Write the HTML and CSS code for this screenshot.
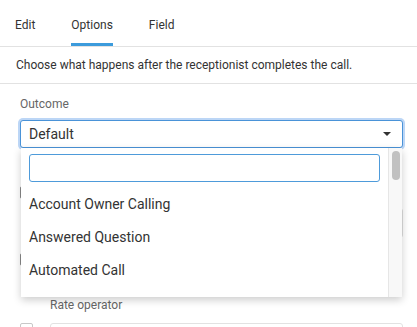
FILE: index.html
```html
<!DOCTYPE html>
<html lang="en">
<head>
    <meta charset="UTF-8">
    <meta name="viewport" content="width=device-width, initial-scale=1.0">
    <title>Call outcome options</title>
    <link rel="stylesheet" href="styles.css">
</head>
<body>
    <!-- Tabs -->
    <div class="tabs">
        <span class="tab">Edit</span>
        <span class="tab active">Options</span>
        <span class="tab">Field</span>
    </div>

    <p class="intro">Choose what happens after the receptionist completes the call.</p>

    <div class="form">
        <!-- Outcome select, opened -->
        <div class="field">
            <div class="field-label">Outcome</div>
            <div class="select-wrap">
                <div class="select">
                    <span>Default</span>
                    <svg class="caret" width="8" height="4" viewBox="0 0 8 4"><path d="M0 0h8L4 4z" fill="#333"/></svg>
                </div>

                <div class="dropdown">
                    <div class="dd-main">
                        <input class="dd-search" type="text">
                        <ul class="dd-list">
                            <li>Account Owner Calling</li>
                            <li>Answered Question</li>
                            <li>Automated Call</li>
                            <li>Billing Question</li>
                        </ul>
                    </div>
                    <div class="dd-scroll"><div class="dd-thumb"></div></div>
                </div>
            </div>
        </div>

        <!-- Options behind the dropdown -->
        <div class="check-row first">
            <span class="box"></span>
            <span class="check-text">Send a follow-up email</span>
        </div>
        <div class="check-input"></div>
        <div class="check-row second">
            <span class="box"></span>
            <span class="check-text">Notify account owner</span>
        </div>
        <div class="check-row third">
            <span class="check-text">Call follow up</span>
        </div>

        <div class="sub-label">Rate operator</div>
        <div class="rate-row">
            <span class="box"></span>
            <div class="rate-input"></div>
        </div>
    </div>
</body>
</html>
```

FILE: styles.css
```css
/* Base */
body {
    margin: 0;
    font-family: Roboto, "Liberation Sans", Arial, sans-serif;
    color: #333;
    background: #fff;
    overflow: hidden;
}

/* Tabs */
.tabs {
    display: flex;
    gap: 36px;
    padding-left: 15px;
    border-bottom: 1px solid #e2e2e2;
}

.tab {
    padding-top: 18px;
    height: 25px;
    line-height: 14px;
    font-size: 12px;
    color: #333;
    border-bottom: 3px solid transparent;
}

.tab.active {
    border-bottom-color: #3c9bdc;
}

.intro {
    margin: 0;
    padding: 10px 16px;
    font-size: 12px;
    line-height: 16px;
    color: #333;
    border-bottom: 1px solid #e2e2e2;
}

/* Form */
.form {
    padding: 0 14px 0 20px;
}

.field-label {
    margin-top: 13px;
    margin-bottom: 9px;
    font-size: 12px;
    line-height: 14px;
    color: #666;
}

.select-wrap {
    position: relative;
}

.select {
    display: flex;
    align-items: center;
    justify-content: space-between;
    height: 28px;
    box-sizing: border-box;
    padding: 0 11px 0 8px;
    font-size: 14px;
    border: 1px solid #4a93d8;
    border-radius: 3px;
    box-shadow: 0 0 0 2px #bcd6f6;
    background: #fff;
}

/* Dropdown list */
.dropdown {
    position: absolute;
    top: 100%;
    left: 1px;
    right: 1px;
    height: 149px;
    display: flex;
    background: #fff;
    box-shadow: 0 3px 8px rgba(0, 0, 0, 0.2);
    z-index: 2;
}

.dd-main {
    flex: 1;
    padding: 6px 8px 0 8px;
    overflow: hidden;
}

.dd-search {
    display: block;
    width: 100%;
    height: 28px;
    box-sizing: border-box;
    margin: 0;
    border: 1px solid #4e9bda;
    border-radius: 3px;
    outline: none;
}

.dd-list {
    list-style: none;
    margin: 6px 0 0;
    padding: 0;
}

.dd-list li {
    padding: 8px 0;
    font-size: 14px;
    line-height: 17px;
    color: #333;
}

.dd-scroll {
    width: 13px;
    border-left: 1px solid #e6e6e6;
    background: #f8f8f8;
}

.dd-thumb {
    width: 8px;
    height: 29px;
    margin: 3px 0 0 3px;
    border-radius: 4px;
    background: #c1c1c1;
}

/* Rows under the dropdown */
.box {
    display: inline-block;
    width: 13px;
    height: 13px;
    box-sizing: border-box;
    border: 1px solid #8a8a8a;
    border-radius: 2px;
    flex: none;
}

.check-row {
    display: flex;
    align-items: center;
    gap: 10px;
    font-size: 13px;
    line-height: 16px;
}

.check-row.first {
    margin-top: 36px;
}

.check-input {
    height: 28px;
    margin: 8px 0 0 30px;
    border: 1px solid #ddd;
    border-radius: 3px;
}

.check-row.second {
    margin-top: 13px;
}

.check-row.third {
    margin-top: 15px;
    padding-left: 18px;
}

.sub-label {
    padding-left: 30px;
    font-size: 12px;
    line-height: 14px;
    color: #666;
}

.rate-row {
    display: flex;
    align-items: flex-start;
    gap: 17px;
    margin-top: 11px;
}

.rate-row .box {
    border-color: #c8c8c8;
}

.rate-input {
    flex: 1;
    height: 28px;
    border: 1px solid #e2e2e2;
    border-radius: 3px;
}
```
